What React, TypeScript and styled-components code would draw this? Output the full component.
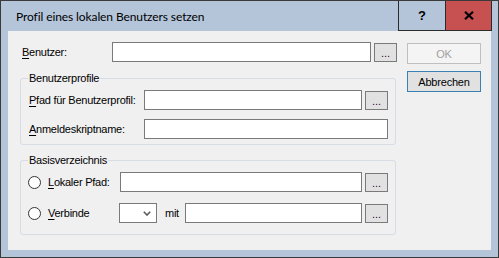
import React from 'react'
import styled, { createGlobalStyle } from 'styled-components'

const GlobalStyle = createGlobalStyle`
  body {
    margin: 0;
    background: #ffffff;
  }
  * {
    box-sizing: border-box;
  }
`

const Window = styled.div`
  width: 499px;
  height: 258px;
  border: 1px solid #3a3a3a;
  background: #b4c5da;
  display: flex;
  flex-direction: column;
  font-family: "Liberation Sans", Arial, sans-serif;
  font-size: 11px;
  color: #000;
`

const TitleBar = styled.div`
  height: 30px;
  display: flex;
  flex-shrink: 0;
`

const Title = styled.div`
  flex: 1;
  padding-left: 15px;
  display: flex;
  align-items: center;
  font-family: Lato, "Segoe UI", sans-serif;
  font-size: 12px;
  letter-spacing: -0.1px;
  color: #000;
`

const Captions = styled.div`
  display: flex;
  margin-right: 6px;
  border-left: 1px solid #2b2b2b;
  border-right: 1px solid #2b2b2b;
  border-bottom: 1px solid #2b2b2b;
`

const CaptionButton = styled.div<{ $close?: boolean }>`
  width: 46px;
  background: ${p => (p.$close ? '#c75050' : 'transparent')};
  border-left: ${p => (p.$close ? '1px solid #2b2b2b' : 'none')};
  display: flex;
  align-items: center;
  justify-content: center;
  font-family: "Liberation Sans", Arial, sans-serif;
  font-weight: bold;
  font-size: 13px;
  padding-bottom: 1px;
`

const Client = styled.div`
  flex: 1;
  margin: 0 7px 7px;
  background: #f0f0f0;
  display: flex;
`

const LeftColumn = styled.div`
  width: 388px;
  padding: 11px 0 0 12px;
`

const RightColumn = styled.div`
  margin-left: 11px;
  padding-top: 12px;
  display: flex;
  flex-direction: column;
  gap: 7px;
`

const Row = styled.div<{ $indent?: number; $gap?: number }>`
  display: flex;
  align-items: center;
  height: 20px;
  padding-left: ${p => p.$indent ?? 0}px;
  margin-top: ${p => p.$gap ?? 0}px;
`

const Label = styled.label<{ $width: number; $pad?: number }>`
  width: ${p => p.$width}px;
  padding-left: ${p => p.$pad ?? 0}px;
  flex-shrink: 0;
  white-space: nowrap;
  letter-spacing: -0.25px;
`

const TextBox = styled.input<{ $width: number }>`
  width: ${p => p.$width}px;
  height: 20px;
  border: 1px solid #7a7a7a;
  background: #fff;
  margin: 0;
  padding: 0 3px;
  font: inherit;
  outline: none;
  flex-shrink: 0;
`

const Browse = styled.button`
  width: 23px;
  height: 19px;
  margin: 0 0 0 3px;
  padding: 0 0 2px;
  border: 1px solid #7a7a7a;
  background: #e1e1e1;
  font: inherit;
  font-size: 11px;
  color: #300040;
  display: flex;
  align-items: flex-end;
  justify-content: center;
  line-height: 1;
  flex-shrink: 0;
`

const DialogButton = styled.button<{ $default?: boolean; $disabled?: boolean }>`
  width: 74px;
  height: 21px;
  margin: 0;
  padding: 0;
  font: inherit;
  letter-spacing: -0.2px;
  background: ${p => (p.$disabled ? '#f4f4f4' : '#e1e1e1')};
  border: 1px solid ${p => (p.$default ? '#3c7fb1' : p.$disabled ? '#bfbfbf' : '#adadad')};
  color: ${p => (p.$disabled ? '#a0a0a0' : '#000')};
`

const Group = styled.fieldset<{ $top: number; $bottom: number }>`
  margin: ${p => p.$top}px 0 0 0;
  width: 376px;
  min-inline-size: 0;
  border: 1px solid #d5dce4;
  border-radius: 3px;
  padding: 5px 7px ${p => p.$bottom}px 8px;
`

const Legend = styled.legend`
  margin-left: -1px;
  padding: 0 1px;
  line-height: 13px;
  font-size: 11px;
  letter-spacing: -0.25px;
`

const Radio = styled.span`
  width: 13px;
  height: 13px;
  margin-left: -1px;
  margin-right: 7px;
  border-radius: 50%;
  border: 1px solid #333;
  background: #fff;
  flex-shrink: 0;
`

const Combo = styled.div`
  width: 38px;
  height: 20px;
  border: 1px solid #7a7a7a;
  background: #fff;
  display: flex;
  align-items: center;
  justify-content: flex-end;
  padding-right: 5px;
  flex-shrink: 0;
`

const Key = styled.u`
  text-decoration: underline;
  text-underline-offset: 2px;
`

const CloseGlyph = () => (
  <svg width="10" height="9" viewBox="0 0 10 9">
    <path d="M1 0.8 L9 8.2 M9 0.8 L1 8.2" stroke="#000" strokeWidth="2.2" />
  </svg>
)

const Chevron = () => (
  <svg width="8" height="5" viewBox="0 0 8 5">
    <path d="M0.8 0.8 L4 4 L7.2 0.8" stroke="#5a5a5a" strokeWidth="1.6" fill="none" />
  </svg>
)

export default function App() {
  return (
    <>
      <GlobalStyle />
      <Window>
        <TitleBar>
          <Title>Profil eines lokalen Benutzers setzen</Title>
          <Captions>
            <CaptionButton>?</CaptionButton>
            <CaptionButton $close>
              <CloseGlyph />
            </CaptionButton>
          </Captions>
        </TitleBar>
        <Client>
          <LeftColumn>
            <Row $indent={2}>
              <Label $width={90}>
                <Key>B</Key>enutzer:
              </Label>
              <TextBox $width={259} />
              <Browse>...</Browse>
            </Row>

            <Group $top={10} $bottom={5}>
              <Legend>Benutzerprofile</Legend>
              <Row>
                <Label $width={115}>
                  <Key>P</Key>fad für Benutzerprofil:
                </Label>
                <TextBox $width={218} />
                <Browse>...</Browse>
              </Row>
              <Row $gap={9}>
                <Label $width={115}>
                  <Key>A</Key>nmeldeskriptname:
                </Label>
                <TextBox $width={244} />
              </Row>
            </Group>

            <Group $top={9} $bottom={11}>
              <Legend>Basisverzeichnis</Legend>
              <Row>
                <Radio />
                <Label $width={72}>
                  <Key>L</Key>okaler Pfad:
                </Label>
                <TextBox $width={242} />
                <Browse>...</Browse>
              </Row>
              <Row $gap={11}>
                <Radio />
                <Label $width={71}>
                  <Key>V</Key>erbinde
                </Label>
                <Combo>
                  <Chevron />
                </Combo>
                <Label $width={28} $pad={8}>mit</Label>
                <TextBox $width={177} />
                <Browse>...</Browse>
              </Row>
            </Group>
          </LeftColumn>
          <RightColumn>
            <DialogButton $disabled>OK</DialogButton>
            <DialogButton $default>Abbrechen</DialogButton>
          </RightColumn>
        </Client>
      </Window>
    </>
  )
}
